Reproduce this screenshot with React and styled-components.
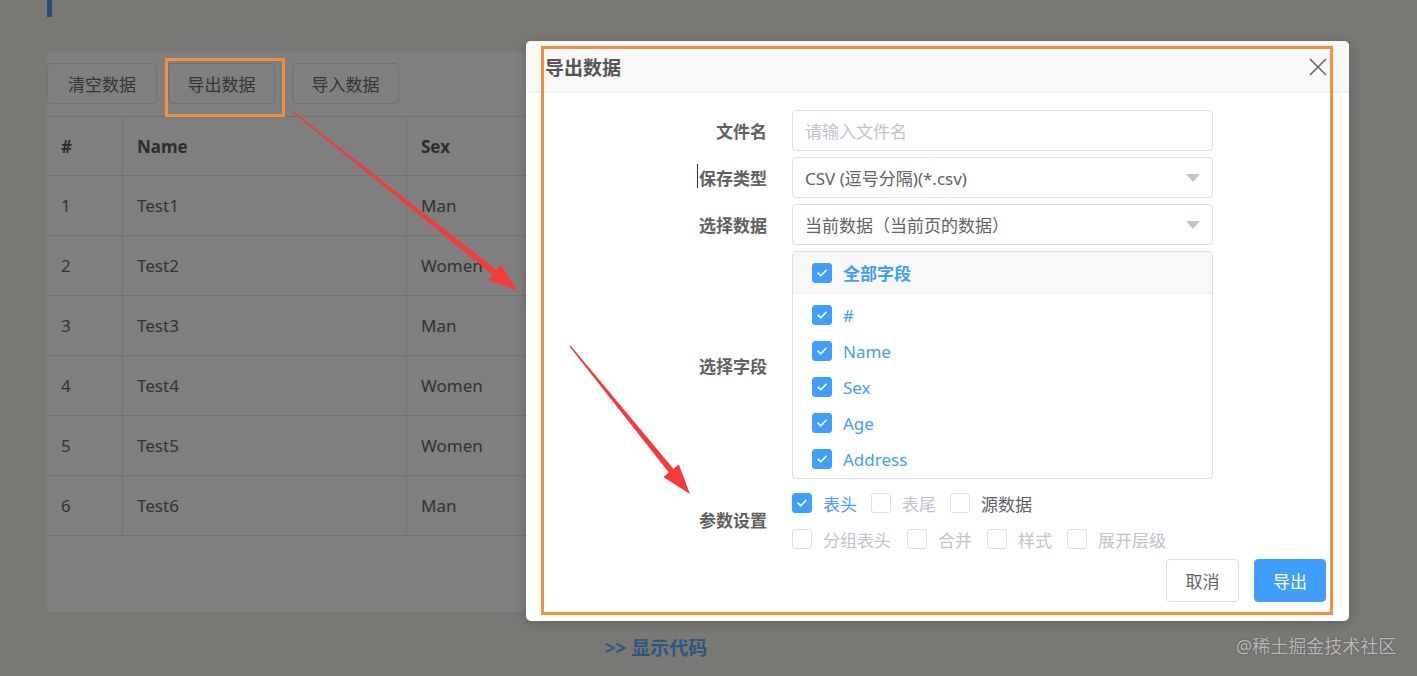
import React from "react";
import styled, { createGlobalStyle, css } from "styled-components";

const GlobalStyle = createGlobalStyle`
    html, body {
        margin: 0;
        padding: 0;
        background: #f4f1e9;
        font-family: "Noto Sans", "Noto Sans CJK SC", sans-serif;
        overflow: hidden;
    }
    * { box-sizing: border-box; }
`;

const FONT = `"Noto Sans", "Noto Sans CJK SC", sans-serif`;

const Page = styled.div`
    position: relative;
    width: 1417px;
    height: 676px;
    padding-left: 47px;
`;
const TitleBar = styled.div`
    height: 17px;
    border-left: 5px solid #4f9cf5;
`;
const Card = styled.div`
    margin-top: 35px;
    width: 1218px;
    height: 561px;
    background: #fff;
    border-bottom: 1px solid #ececec;
    padding-top: 11px;
`;
const Toolbar = styled.div`
    display: flex;
    align-items: center;
    height: 41px;
`;
const ToolButton = styled.button`
    height: 41px;
    width: ${p => p.$w}px;
    margin-right: ${p => p.$mr}px;
    border: 1px solid #e2e2e2;
    border-radius: 4px;
    background: #fff;
    color: #6a6a6a;
    font-family: ${FONT};
    font-size: 17px;
    padding: 0;
`;
const Table = styled.div`
    margin-top: 12px;
    border-top: 1px solid #e6e6e6;
`;
const TRow = styled.div`
    display: grid;
    grid-template-columns: 75px 284px 1fr;
    height: ${p => (p.$head ? 59 : 60)}px;
    border-bottom: 1px solid #e6e6e6;
`;
const Cell = styled.div`
    display: flex;
    align-items: center;
    padding-left: 14px;
    font-size: 17px;
    color: ${p => (p.$head ? "#5a5a5a" : "#666")};
    font-weight: ${p => (p.$head ? 700 : 400)};
    & + & { border-left: 1px solid #e6e6e6; }
`;
const ShowCode = styled.div`
    width: 1218px;
    text-align: center;
    margin-top: 20px;
    font-size: 19px;
    font-weight: 700;
    color: #58b0ff;
`;
const Mask = styled.div`
    position: absolute;
    inset: 0;
    background: rgba(0, 0, 0, 0.5);
`;
const Dialog = styled.div`
    position: absolute;
    left: 526px;
    top: 41px;
    width: 823px;
    height: 580px;
    background: #fff;
    border-radius: 5px;
    overflow: hidden;
    box-shadow: 0 2px 12px rgba(0, 0, 0, 0.2);
`;
const DialogHeader = styled.div`
    display: flex;
    align-items: center;
    justify-content: space-between;
    height: 52px;
    padding: 0 22px 0 19px;
    background: #f8f8f9;
    border-bottom: 1px solid #ebeef5;
`;
const DialogTitle = styled.div`
    font-size: 19px;
    font-weight: 700;
    color: #555;
`;
const Form = styled.div`
    padding-top: 17px;
`;
const Row = styled.div`
    display: grid;
    grid-template-columns: 241px 421px;
    column-gap: 25px;
    align-items: center;
    margin-bottom: ${p => p.$mb ?? 6}px;
`;
const Label = styled.div`
    text-align: right;
    font-size: 17px;
    font-weight: 700;
    color: #5f6062;
    position: relative;
    padding-bottom: ${p => p.$lift ?? 0}px;
    ${p => p.$caret && css`
        &::before {
            content: "";
            position: absolute;
            left: 171px;
            top: -1px;
            width: 1px;
            height: 24px;
            background: #333;
        }
    `}
`;
const Field = styled.div`
    display: flex;
    align-items: center;
    justify-content: space-between;
    height: 41px;
    padding: 0 12px;
    border: 1px solid #dcdfe6;
    border-radius: 4px;
    font-size: 17px;
    color: ${p => (p.$placeholder ? "#c0c4cc" : "#606266")};
`;
const Caret = styled.span`
    width: 0;
    height: 0;
    border-left: 7px solid transparent;
    border-right: 7px solid transparent;
    border-top: 8px solid #c0c4cc;
`;
const FieldBox = styled.div`
    height: 228px;
    border: 1px solid #dcdfe6;
    border-radius: 4px;
    overflow: hidden;
`;
const FieldHead = styled.div`
    display: flex;
    align-items: center;
    height: 42px;
    padding-left: 19px;
    background: #f8f8f9;
    border-bottom: 1px solid #ebeef5;
`;
const FieldList = styled.div`
    padding-top: 3px;
`;
const FieldItem = styled.div`
    display: flex;
    align-items: center;
    height: 36px;
    padding-left: 19px;
`;
const Check = styled.label`
    display: inline-flex;
    align-items: center;
    margin-right: ${p => p.$mr ?? 0}px;
    font-size: 17px;
    font-weight: ${p => (p.$bold ? 700 : 400)};
    color: ${p => (p.$checked ? "#409eff" : p.$disabled ? "#c0c4cc" : "#606266")};
`;
const Box = styled.span`
    display: inline-flex;
    align-items: center;
    justify-content: center;
    width: 20px;
    height: 20px;
    margin-right: 11px;
    border-radius: 3px;
    border: 1px solid ${p => (p.$checked ? "#409eff" : "#dcdfe6")};
    background: ${p => (p.$checked ? "#409eff" : "#fff")};
`;
const Params = styled.div`
    display: flex;
    flex-direction: column;
`;
const ParamLine = styled.div`
    display: flex;
    align-items: center;
    height: 36px;
`;
const Footer = styled.div`
    display: flex;
    justify-content: flex-end;
    gap: 15px;
    padding-right: 23px;
    margin-top: 2px;
`;
const Btn = styled.button`
    height: 43px;
    width: ${p => p.$w}px;
    padding: 0;
    border-radius: 4px;
    font-family: ${FONT};
    font-size: 17px;
    border: 1px solid ${p => (p.$primary ? "#409eff" : "#dcdfe6")};
    background: ${p => (p.$primary ? "#409eff" : "#fff")};
    color: ${p => (p.$primary ? "#fff" : "#606266")};
`;
const Watermark = styled.div`
    position: absolute;
    left: 1236px;
    top: 632px;
    font-size: 18px;
    color: #b8b8b8;
    text-shadow: 0 0 2px rgba(0, 0, 0, 0.35);
`;
const Annotations = styled.svg`
    position: absolute;
    left: 0;
    top: 0;
    pointer-events: none;
`;

const CheckBox = ({ checked, disabled, children, mr, bold }) => (
    <Check $checked={checked} $disabled={disabled} $mr={mr} $bold={bold}>
        <Box $checked={checked}>
            {checked && (
                <svg width="12" height="10" viewBox="0 0 12 10">
                    <path d="M2 5.2 L4.8 7.8 L10 2.4" fill="none" stroke="#fff" strokeWidth="1.6" strokeLinecap="round" strokeLinejoin="round" />
                </svg>
            )}
        </Box>
        {children}
    </Check>
);

// tapered arrow polygon, like a screenshot tool draws
const arrowPoints = (x1, y1, x2, y2) => {
    const dx = x2 - x1, dy = y2 - y1;
    const len = Math.hypot(dx, dy);
    const ux = dx / len, uy = dy / len;
    const nx = -uy, ny = ux;
    const head = 30, hw = 10, w0 = 0.6, w1 = 3;
    const bx = x2 - ux * head, by = y2 - uy * head;
    const p = (x, y) => `${x.toFixed(1)},${y.toFixed(1)}`;
    return [
        p(x1 + nx * w0, y1 + ny * w0),
        p(bx + nx * w1, by + ny * w1),
        p(bx + nx * hw, by + ny * hw),
        p(x2, y2),
        p(bx - nx * hw, by - ny * hw),
        p(bx - nx * w1, by - ny * w1),
        p(x1 - nx * w0, y1 - ny * w0),
    ].join(" ");
};

const rows = [
    ["1", "Test1", "Man"],
    ["2", "Test2", "Women"],
    ["3", "Test3", "Man"],
    ["4", "Test4", "Women"],
    ["5", "Test5", "Women"],
    ["6", "Test6", "Man"],
];
const fields = ["#", "Name", "Sex", "Age", "Address"];

const App = () => (
    <>
        <GlobalStyle />
        <Page>
            <TitleBar />
            <Card>
                <Toolbar>
                    <ToolButton $w={110} $mr={11}>清空数据</ToolButton>
                    <ToolButton $w={107} $mr={17}>导出数据</ToolButton>
                    <ToolButton $w={107} $mr={0}>导入数据</ToolButton>
                </Toolbar>
                <Table>
                    <TRow $head>
                        <Cell $head>#</Cell>
                        <Cell $head>Name</Cell>
                        <Cell $head>Sex</Cell>
                    </TRow>
                    {rows.map(r => (
                        <TRow key={r[0]}>
                            {r.map((c, i) => <Cell key={i}>{c}</Cell>)}
                        </TRow>
                    ))}
                </Table>
            </Card>
            <ShowCode>&gt;&gt; 显示代码</ShowCode>

            <Mask />

            <Dialog>
                <DialogHeader>
                    <DialogTitle>导出数据</DialogTitle>
                    <svg width="18" height="18" viewBox="0 0 18 18">
                        <path d="M1 1 L17 17 M17 1 L1 17" stroke="#666" strokeWidth="1.6" />
                    </svg>
                </DialogHeader>
                <Form>
                    <Row>
                        <Label>文件名</Label>
                        <Field $placeholder>请输入文件名</Field>
                    </Row>
                    <Row>
                        <Label $caret>保存类型</Label>
                        <Field>CSV (逗号分隔)(*.csv)<Caret /></Field>
                    </Row>
                    <Row>
                        <Label>选择数据</Label>
                        <Field>当前数据（当前页的数据）<Caret /></Field>
                    </Row>
                    <Row $mb={6}>
                        <Label>选择字段</Label>
                        <FieldBox>
                            <FieldHead>
                                <CheckBox checked bold>全部字段</CheckBox>
                            </FieldHead>
                            <FieldList>
                                {fields.map(f => (
                                    <FieldItem key={f}>
                                        <CheckBox checked>{f}</CheckBox>
                                    </FieldItem>
                                ))}
                            </FieldList>
                        </FieldBox>
                    </Row>
                    <Row $mb={0}>
                        <Label $lift={4}>参数设置</Label>
                        <Params>
                            <ParamLine>
                                <CheckBox checked mr={14}>表头</CheckBox>
                                <CheckBox disabled mr={14}>表尾</CheckBox>
                                <CheckBox>源数据</CheckBox>
                            </ParamLine>
                            <ParamLine>
                                <CheckBox disabled mr={16}>分组表头</CheckBox>
                                <CheckBox disabled mr={15}>合并</CheckBox>
                                <CheckBox disabled mr={15}>样式</CheckBox>
                                <CheckBox disabled>展开层级</CheckBox>
                            </ParamLine>
                        </Params>
                    </Row>
                    <Footer>
                        <Btn $w={73}>取消</Btn>
                        <Btn $w={72} $primary>导出</Btn>
                    </Footer>
                </Form>
            </Dialog>

            <Watermark>@稀土掘金技术社区</Watermark>

            <Annotations width="1417" height="676" viewBox="0 0 1417 676">
                <rect x="166.5" y="59.5" width="117" height="56" fill="none" stroke="#f0913e" strokeWidth="3" />
                <rect x="542.5" y="47.5" width="789" height="566" fill="none" stroke="#f0913e" strokeWidth="3" />
                <polygon points={arrowPoints(292, 111, 518, 291)} fill="#f33b3b" />
                <polygon points={arrowPoints(570, 346, 690, 494)} fill="#f33b3b" />
            </Annotations>
        </Page>
    </>
);

export default App;
